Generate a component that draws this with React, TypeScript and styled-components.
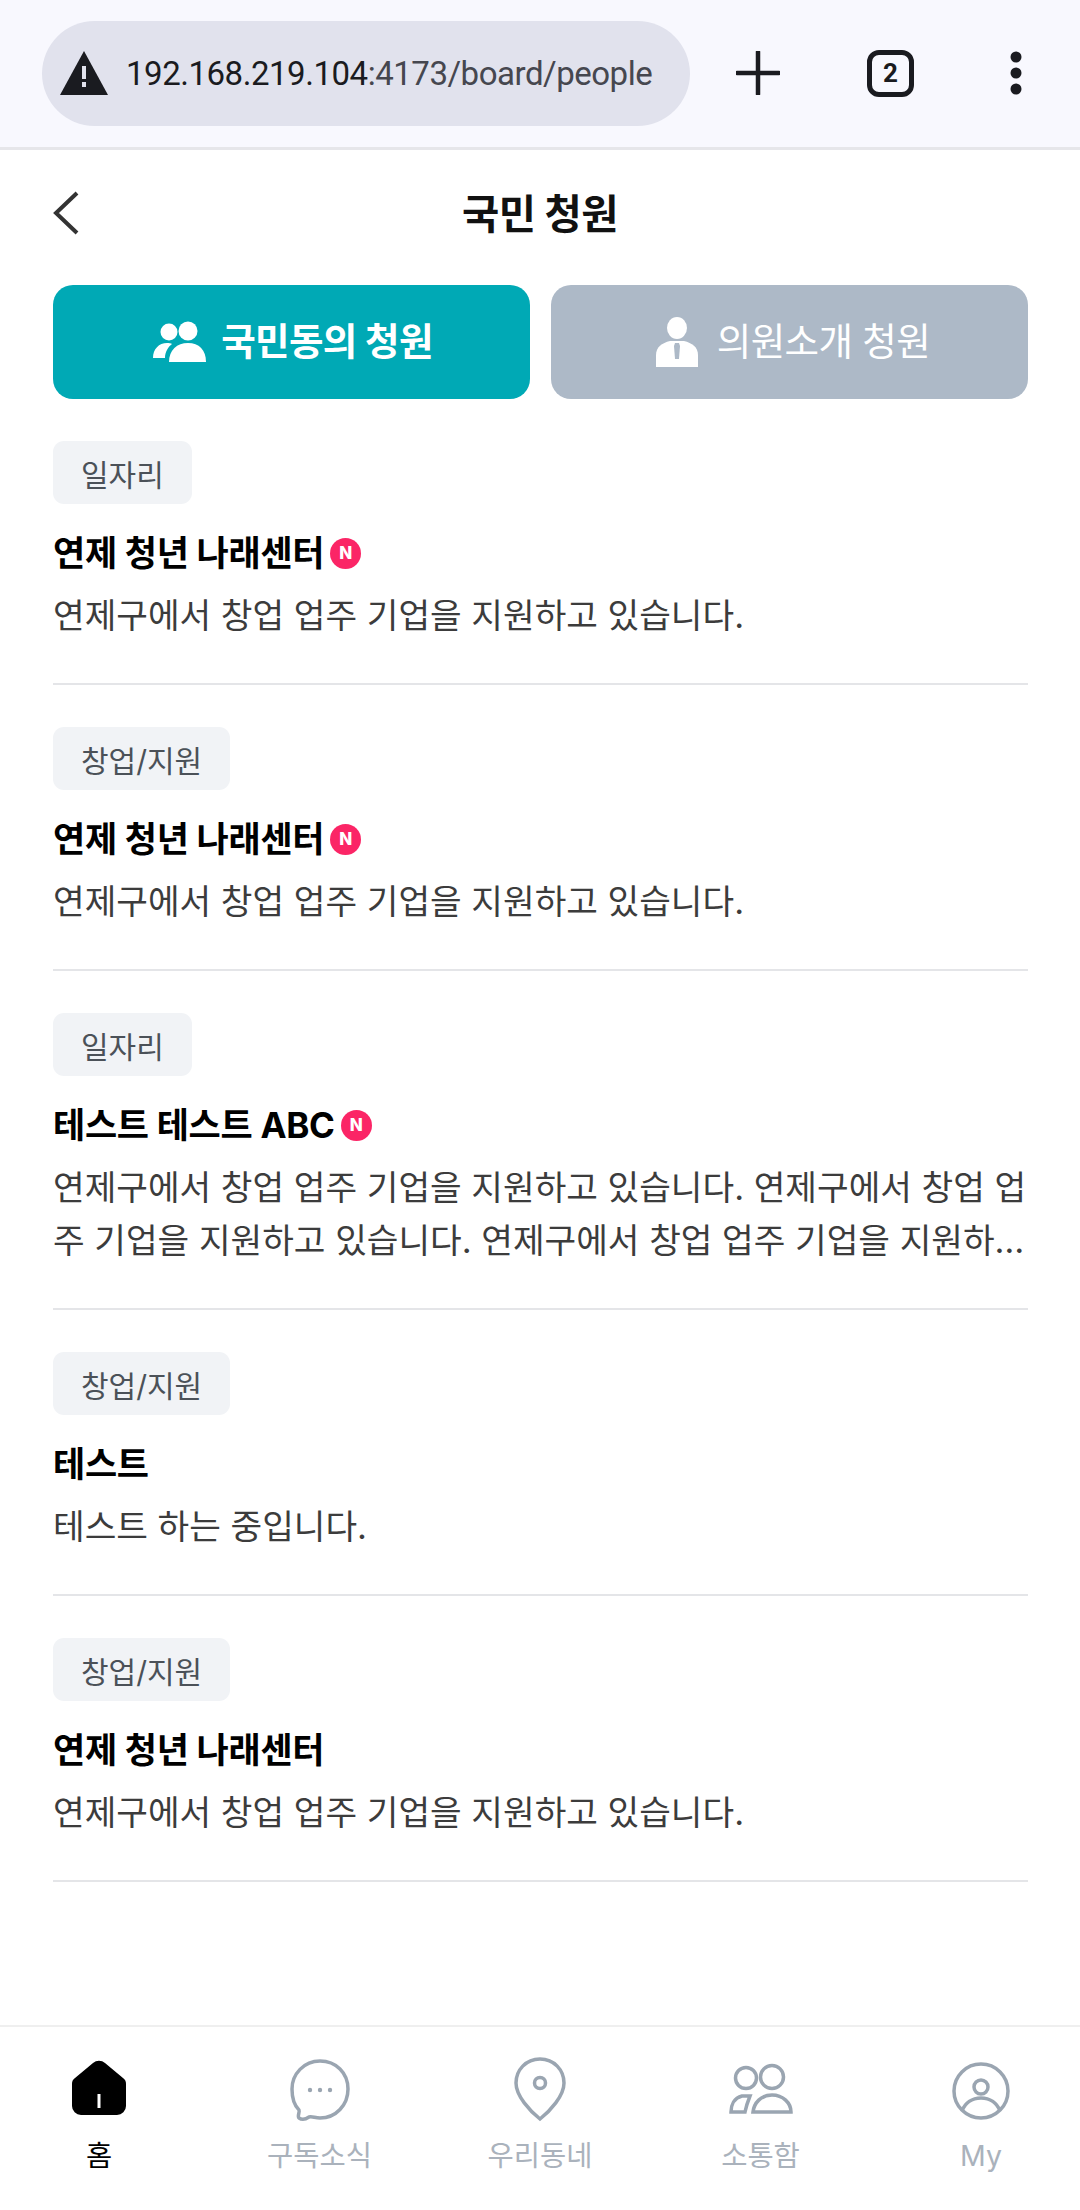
import styled, { createGlobalStyle } from "styled-components";

const GlobalStyle = createGlobalStyle`
  html, body {
    margin: 0;
    padding: 0;
    background: #fff;
  }
  * {
    box-sizing: border-box;
  }
  body {
    font-family: Inter, "Noto Sans CJK KR", sans-serif;
  }
`;

const Page = styled.div`
  display: flex;
  flex-direction: column;
  height: 2210px;
  width: 1080px;
`;

const BrowserBar = styled.div`
  align-items: center;
  background: #f8f8fe;
  border-bottom: 3px solid #e6e6ea;
  display: flex;
  height: 150px;
  padding: 0 0 1px 42px;
`;

const UrlPill = styled.div`
  align-items: center;
  background: #e1e2ed;
  border-radius: 53px;
  display: flex;
  gap: 18px;
  height: 105px;
  padding-left: 18px;
  width: 648px;
`;

const UrlText = styled.div`
  color: #46474f;
  font-family: Roboto, sans-serif;
  font-size: 33px;
  letter-spacing: -0.47px;
  white-space: nowrap;

  b {
    color: #1a1b20;
    font-weight: 400;
  }
`;

const BarIcons = styled.div`
  align-items: center;
  display: flex;
  margin-left: 46px;
`;

const TabCount = styled.div`
  align-items: center;
  border: 5px solid #1a1b20;
  border-radius: 12px;
  color: #1a1b20;
  display: flex;
  font-family: Roboto, sans-serif;
  font-size: 26px;
  font-weight: 700;
  height: 47px;
  justify-content: center;
  margin: 0 95px 0 87px;
  width: 47px;
`;

const Header = styled.header`
  align-items: center;
  display: flex;
  height: 93px;
  justify-content: center;
  margin-top: 15px;
  padding: 0 53px;
  position: relative;
`;

const BackButton = styled.button`
  background: none;
  border: none;
  display: flex;
  left: 53px;
  padding: 0;
  position: absolute;
  top: 26px;
`;

const Title = styled.h1`
  color: #111;
  font-size: 40.5px;
  font-weight: 700;
  letter-spacing: -0.5px;
  margin: 0;
`;

const Tabs = styled.div`
  display: grid;
  gap: 21px;
  grid-template-columns: 1fr 1fr;
  margin-top: 27px;
  padding: 0 52px 0 53px;
`;

const Tab = styled.button<{ $active?: boolean }>`
  align-items: center;
  background: ${(p) => (p.$active ? "#00a9b5" : "#adb9c7")};
  border: none;
  border-radius: 20px;
  color: #fff;
  display: flex;
  font-family: inherit;
  font-size: 37.5px;
  font-weight: ${(p) => (p.$active ? 700 : 400)};
  gap: ${(p) => (p.$active ? "15px" : "18px")};
  height: 114px;
  justify-content: center;
  letter-spacing: -0.6px;
  padding: 0 0 0 ${(p) => (p.$active ? "2px" : "6px")};
`;

const TabLabel = styled.span`
  padding-bottom: 8px;
`;

const List = styled.ul`
  display: flex;
  flex: 1;
  flex-direction: column;
  list-style: none;
  margin: 0;
  padding: 42px 52px 0 53px;
`;

const Item = styled.li`
  border-bottom: 2px solid #e4e5e8;
  margin-bottom: 42px;
  padding-bottom: 41px;
`;

const Chip = styled.span`
  align-items: center;
  background: #f1f3f6;
  border-radius: 11px;
  color: #4b5158;
  display: inline-flex;
  font-size: 30px;
  height: 63px;
  padding: 0 28px;
`;

const ItemTitle = styled.h2`
  align-items: center;
  color: #000;
  display: flex;
  font-size: 35px;
  font-weight: 700;
  gap: 6px;
  height: 46px;
  letter-spacing: -0.3px;
  line-height: 46px;
  margin: 26px 0 0;
`;

const NewBadge = styled.span`
  align-items: center;
  background: #fb2566;
  border-radius: 50%;
  color: #fff;
  display: inline-flex;
  font-size: 17px;
  font-weight: 800;
  height: 31px;
  justify-content: center;
  letter-spacing: 0;
  line-height: 1;
  width: 31px;
`;

const Description = styled.p`
  -webkit-box-orient: vertical;
  -webkit-line-clamp: 2;
  color: #3c3c3c;
  display: -webkit-box;
  font-size: 34.4px;
  line-height: 53px;
  margin: 13px 0 0;
  overflow: hidden;
  word-break: break-all;
`;

const BottomNav = styled.nav`
  border-top: 2px solid #efefef;
  display: flex;
  height: 185px;
  justify-content: space-between;
  padding: 0 39px;
`;

const NavItem = styled.a<{ $active?: boolean }>`
  align-items: center;
  color: ${(p) => (p.$active ? "#000" : "#aab2bc")};
  display: flex;
  flex-direction: column;
  font-size: 28.5px;
  gap: 13px;
  line-height: 40px;
  padding-top: 30px;
  width: 120px;
`;

const NavIcon = styled.svg`
  display: block;
  fill: none;
  height: 66px;
  stroke: #9aa5b1;
  stroke-width: 3.5;
  width: 66px;
`;

const items = [
  { category: "일자리", title: "연제 청년 나래센터", isNew: true, body: "연제구에서 창업 업주 기업을 지원하고 있습니다." },
  { category: "창업/지원", title: "연제 청년 나래센터", isNew: true, body: "연제구에서 창업 업주 기업을 지원하고 있습니다." },
  {
    category: "일자리",
    title: "테스트 테스트 ABC",
    isNew: true,
    body: "연제구에서 창업 업주 기업을 지원하고 있습니다. 연제구에서 창업 업주 기업을 지원하고 있습니다. 연제구에서 창업 업주 기업을 지원하고 있습니다. 연제구에서 창업 업주 기업을 지원하고 있습니다.",
  },
  { category: "창업/지원", title: "테스트", isNew: false, body: "테스트 하는 중입니다." },
  { category: "창업/지원", title: "연제 청년 나래센터", isNew: false, body: "연제구에서 창업 업주 기업을 지원하고 있습니다." },
];

function PeopleIcon() {
  return (
    <svg width="54" height="42" viewBox="0 0 54 42" fill="#fff">
      <circle cx="17" cy="11" r="8.5" />
      <circle cx="36" cy="10" r="9.5" />
      <path d="M1 37c0-9 6-15 14-15 2 0 4 .4 5 1-4 3-7 8-7 14z" />
      <path d="M17 41c0-12 8-19 19-19s18 7 18 19z" />
    </svg>
  );
}

function MemberIcon() {
  return (
    <svg width="44" height="50" viewBox="0 0 44 50" fill="#fff">
      <ellipse cx="22" cy="11" rx="10" ry="11" />
      <path d="M1 50V38c0-8 6-12 14-14h14c8 2 14 6 14 14v12z" />
      <path d="M20 26h4l1 3-1 13h-4l-1-13z" fill="#adb9c7" />
    </svg>
  );
}

export default function App() {
  return (
    <Page>
      <GlobalStyle />
      <BrowserBar>
        <UrlPill>
          <svg width="48" height="44" viewBox="0 0 48 44">
            <path d="M24 0 48 44H0z" fill="#1a1b20" />
            <rect x="22" y="15" width="4" height="13" fill="#e1e2ed" />
            <rect x="22" y="31" width="4" height="5" fill="#e1e2ed" />
          </svg>
          <UrlText>
            <b>192.168.219.104</b>:4173/board/people
          </UrlText>
        </UrlPill>
        <BarIcons>
          <svg width="44" height="44" viewBox="0 0 44 44">
            <path d="M22 1v42M1 22h42" stroke="#1a1b20" strokeWidth="4.5" strokeLinecap="round" />
          </svg>
          <TabCount>2</TabCount>
          <svg width="14" height="44" viewBox="0 0 14 44" fill="#1a1b20">
            <circle cx="7" cy="6" r="5.5" />
            <circle cx="7" cy="22" r="5.5" />
            <circle cx="7" cy="38" r="5.5" />
          </svg>
        </BarIcons>
      </BrowserBar>

      <Header>
        <BackButton aria-label="뒤로">
          <svg width="28" height="44" viewBox="0 0 28 44" fill="none">
            <path d="M24 2 3 22l21 20" stroke="#333" strokeWidth="4" />
          </svg>
        </BackButton>
        <Title>국민 청원</Title>
      </Header>

      <Tabs>
        <Tab $active>
          <PeopleIcon />
          <TabLabel>국민동의 청원</TabLabel>
        </Tab>
        <Tab>
          <MemberIcon />
          <TabLabel>의원소개 청원</TabLabel>
        </Tab>
      </Tabs>

      <List>
        {items.map((item, i) => (
          <Item key={i}>
            <Chip>{item.category}</Chip>
            <ItemTitle>
              {item.title}
              {item.isNew && <NewBadge>N</NewBadge>}
            </ItemTitle>
            <Description>{item.body}</Description>
          </Item>
        ))}
      </List>

      <BottomNav>
        <NavItem $active>
          <svg width="66" height="66" viewBox="0 0 66 66">
            <path
              d="M27 7a9 9 0 0 1 12 0l18 15a7 7 0 0 1 3 6v22a9 9 0 0 1-9 9H15a9 9 0 0 1-9-9V28a7 7 0 0 1 3-6z"
              transform="translate(0 -1)"
              fill="#000"
            />
            <path d="M33 37v14" stroke="#fff" strokeWidth="3" />
          </svg>
          홈
        </NavItem>
        <NavItem>
          <NavIcon viewBox="0 0 66 66">
            <path d="M33 4c16 0 28 12 28 28S49 61 33 61c-5 0-8-2-11-1-3 2-7 3-10 1-2-2 1-6 0-8-5-5-7-13-7-21C5 17 17 4 33 4z" />
            <circle cx="23" cy="33" r="2.2" fill="#9aa5b1" stroke="none" />
            <circle cx="33" cy="33" r="2.2" fill="#9aa5b1" stroke="none" />
            <circle cx="43" cy="33" r="2.2" fill="#9aa5b1" stroke="none" />
          </NavIcon>
          구독소식
        </NavItem>
        <NavItem>
          <NavIcon viewBox="0 0 66 66">
            <path d="M33 2c14 0 24 11 24 24 0 13-14 28-24 36C23 54 9 39 9 26 9 13 19 2 33 2z" />
            <circle cx="33" cy="26" r="5.5" />
          </NavIcon>
          우리동네
        </NavItem>
        <NavItem>
          <NavIcon viewBox="0 0 66 66">
            <circle cx="18" cy="21" r="10.5" />
            <circle cx="44" cy="20" r="11.5" />
            <path d="M14 39h8c-2 5-4 11-5 16H3c0-7 3-14 11-16z" />
            <path d="M44 38c11 0 19 8 19 17H25c1-9 8-17 19-17z" />
          </NavIcon>
          소통함
        </NavItem>
        <NavItem>
          <NavIcon viewBox="0 0 66 66">
            <circle cx="33" cy="34" r="27" />
            <circle cx="33" cy="30" r="7" />
            <path d="M14 54c3-8 10-13 19-13s16 5 19 13" />
          </NavIcon>
          My
        </NavItem>
      </BottomNav>
    </Page>
  );
}
